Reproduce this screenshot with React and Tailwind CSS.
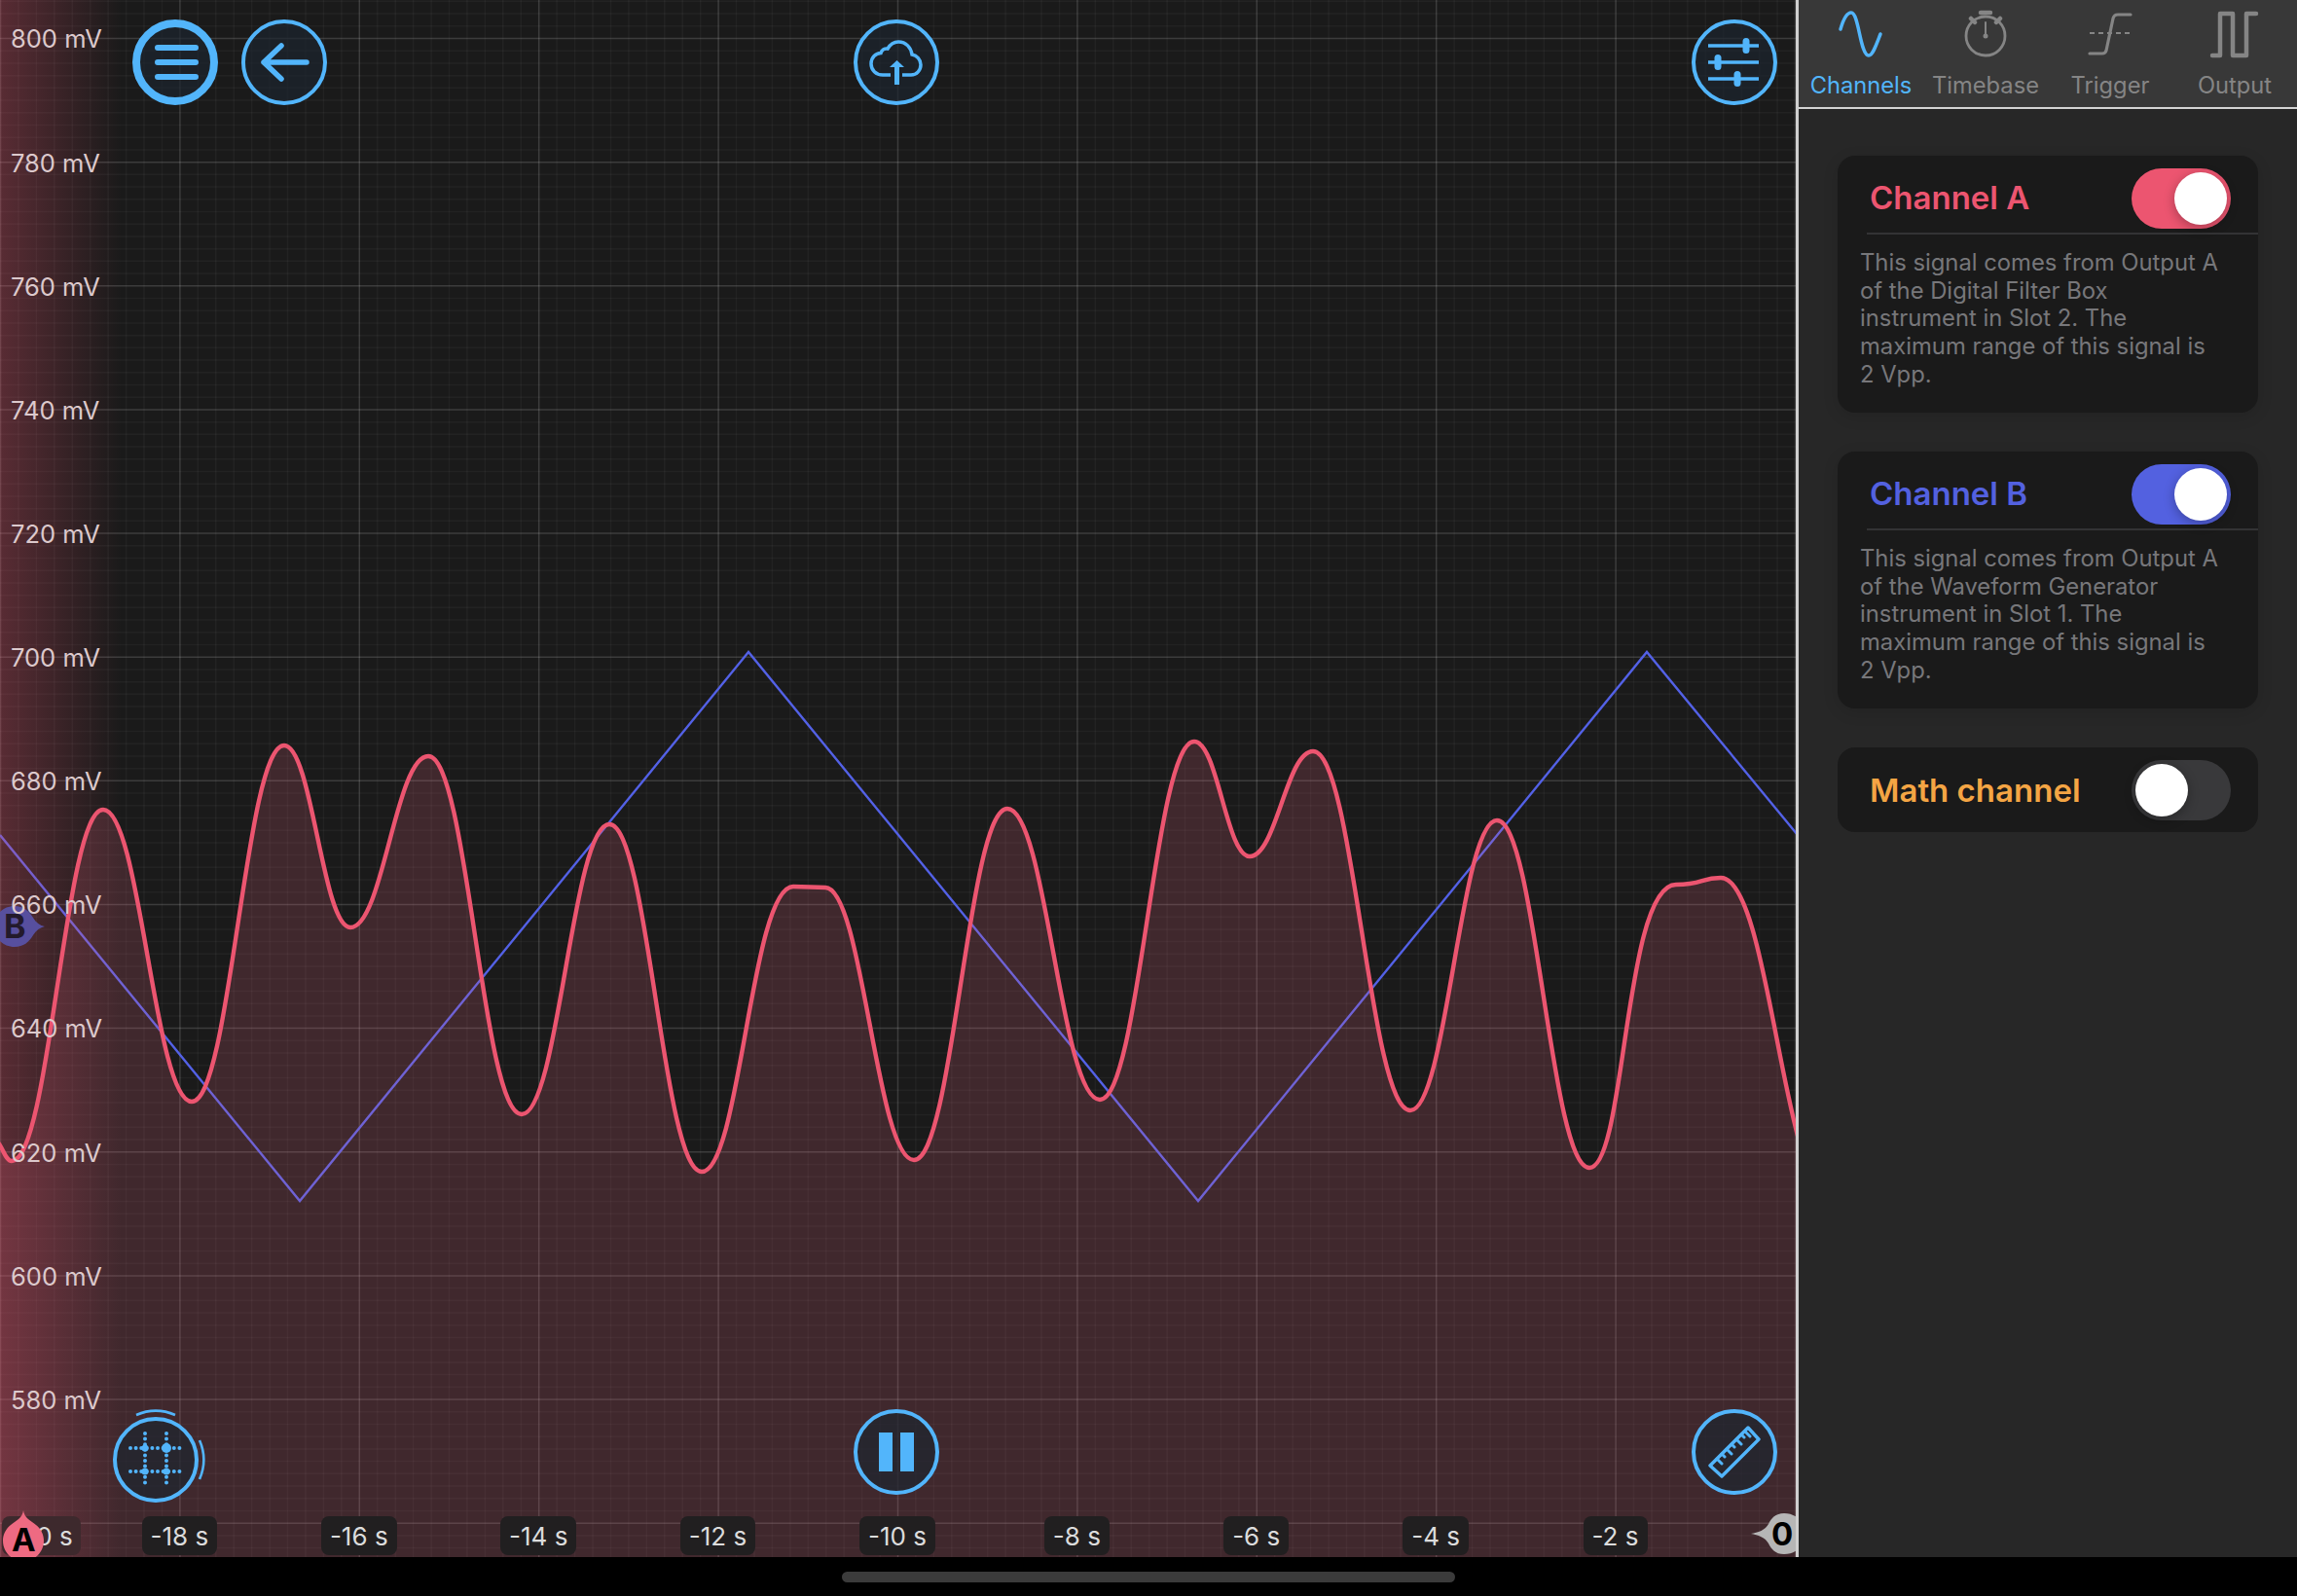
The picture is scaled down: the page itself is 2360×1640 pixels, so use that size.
const FONT = "[font-family:Inter,sans-serif]";

// turning points of channel A, joined with flat tangents (third value widens the top)
const redPoints = [
  [-6, 1172], [12, 1193], [106, 832], [197, 1132], [292, 766], [360, 953], [440, 777],
  [536, 1145], [626, 847], [721, 1204], [815, 911, 0.46], [848, 912, 0.42], [939, 1192], [1035, 831], [1130, 1130],
  [1227, 762], [1284, 880], [1349, 772], [1449, 1141], [1538, 843], [1633, 1200],
  [1722, 909, 0.6], [1768, 902, 0.45], [1879, 1225],
];

function curve(pts) {
  let d = `M${pts[0][0]} ${pts[0][1]}`;
  for (let i = 1; i < pts.length; i++) {
    const [x0, y0, k0 = 0.42] = pts[i - 1];
    const [x1, y1, k1 = 0.42] = pts[i];
    const dx = x1 - x0;
    d += ` C${x0 + dx * k0} ${y0} ${x1 - dx * k1} ${y1} ${x1} ${y1}`;
  }
  return d;
}

const redLine = curve(redPoints);
const xStep = 18.44;
const yStep = 12.714;

function Chart() {
  const verticals = Array.from({ length: 101 }, (_, i) => i);
  const horizontals = Array.from({ length: 130 }, (_, i) => i - 3);
  return (
    <svg className="absolute inset-0" width="1845" height="1600" viewBox="0 0 1845 1600">
      {verticals.map((i) => (
        <line key={i} x1={i * xStep + 0.5} x2={i * xStep + 0.5} y1="0" y2="1600" stroke="#fff" strokeOpacity={i % 10 === 0 ? 0.15 : 0.04} strokeWidth="1.5" />
      ))}
      {horizontals.map((i) => (
        <line key={i} y1={39.5 + i * yStep} y2={39.5 + i * yStep} x1="0" x2="1845" stroke="#fff" strokeOpacity={(i + 30) % 10 === 0 ? 0.15 : 0.04} strokeWidth="1.5" />
      ))}
      <path d="M0 858 L308 1234 L769 670 L1231 1234 L1692 670 L1847 858" fill="none" stroke="#5361e6" strokeWidth="2.4" />
      <path d={`${redLine} L1879 1600 L-6 1600 Z`} fill="#ec6a83" fillOpacity="0.18" />
      <path d={redLine} fill="none" stroke="#ec5570" strokeWidth="4.4" />
    </svg>
  );
}

function RoundButton({ className, thick, children }) {
  return (
    <div className={`absolute w-[88px] h-[88px] rounded-full bg-[#1d252f]/70 border-[#52b5fb] ${thick ? "border-[8px]" : "border-[4px]"} ${className}`}>
      <svg className={`absolute overflow-visible ${thick ? "inset-[-8px]" : "inset-[-4px]"}`} width="88" height="88" viewBox="0 0 88 88">
        {children}
      </svg>
    </div>
  );
}

function Toggle({ color, on }) {
  return (
    <div className={`w-[102px] h-[62px] rounded-full flex items-center px-[4px] ${color} ${on ? "justify-end" : "justify-start"}`}>
      <div className="w-[54px] h-[54px] rounded-full bg-white shadow-[0_3px_12px_rgba(0,0,0,0.3)]" />
    </div>
  );
}

function ChannelCard({ title, titleColor, toggleColor, lines }) {
  return (
    <div className="bg-[#1a1a1a] rounded-[18px] h-[264px] shadow-[0_4px_16px_rgba(0,0,0,0.12)]">
      <div className="ml-[30px] h-[81px] pt-[9px] pl-[3px] pr-[28px] flex items-center justify-between border-b-[2px] border-[#333335]">
        <span className={`text-[33px] font-semibold ${titleColor}`}>{title}</span>
        <div className="-mt-[1px]">
          <Toggle color={toggleColor} on />
        </div>
      </div>
      <div className="ml-[23px] mt-[15px] text-[23.8px] leading-[28.7px] text-[#77777a]">
        {lines.map((line) => (
          <div key={line}>{line}</div>
        ))}
      </div>
    </div>
  );
}

function Tab({ label, active, children }) {
  return (
    <div className={`flex-1 flex flex-col items-center ${active ? "text-[#52b5fb]" : "text-[#858585]"}`}>
      <svg className="mt-[10px] mb-[14px]" width="60" height="50" viewBox="0 0 60 50" fill="none" stroke="currentColor" strokeLinecap="round" strokeLinejoin="round">
        {children}
      </svg>
      <span className="text-[23.7px] leading-[28px]">{label}</span>
    </div>
  );
}

const yLabels = [800, 780, 760, 740, 720, 700, 680, 660, 640, 620, 600, 580];
const xLabels = [-18, -16, -14, -12, -10, -8, -6, -4, -2];

export default function App() {
  return (
    <div className={`w-[2360px] h-[1640px] bg-black flex flex-col overflow-hidden ${FONT}`}>
      <div className="h-[1600px] flex">
        <div className="relative w-[1845px] bg-[#1a1a1a] overflow-hidden">
          <Chart />
          <div className="absolute inset-y-0 left-0 w-[125px] bg-gradient-to-r from-[#ec5570]/30 to-transparent" />

          {/* channel B marker */}
          <svg className="absolute left-0 top-[930px]" width="50" height="44" viewBox="0 0 50 44">
            <path d="M15 1 C24 1 30 6 34 13 C37 18 41 21 46 22 C41 23 37 26 34 31 C30 38 24 43 15 43 C3 43 -6 34 -6 22 C-6 10 3 1 15 1 Z" fill="#574f9e" />
          </svg>
          <span className="absolute left-[4px] top-[932px] text-[34px] leading-[40px] font-bold text-[#231a2c]">B</span>

          <div className="absolute left-[11px] top-[-23px] flex flex-col">
            {yLabels.map((v) => (
              <div key={v} className="h-[127.14px] flex items-center text-[25.5px] text-[#dcc9cc]">{v} mV</div>
            ))}
          </div>

          <RoundButton thick className="left-[136px] top-[20px]">
            <path d="M26 29 H65 M26 44 H65 M26 59 H65" stroke="#52b5fb" strokeWidth="6" strokeLinecap="round" />
          </RoundButton>
          <RoundButton className="left-[248px] top-[20px]">
            <path d="M23 44 H67 M41 27 L23 44 L41 61" fill="none" stroke="#52b5fb" strokeWidth="5.5" strokeLinecap="round" strokeLinejoin="round" />
          </RoundButton>
          <RoundButton className="left-[877px] top-[20px]">
            <path d="M38 57 H30 C23 57 18 52 18 45.5 C18 39 23 34.5 28 34.5 C29 31 32 29.5 35 30 C38 25 41 23 46 23 C54 23 59 29 60 36 C65 37 69 41 69 46.5 C69 52 65 57 59 57 H50" fill="none" stroke="#52b5fb" strokeWidth="3.5" />
            <path d="M44.5 67 V46" stroke="#52b5fb" strokeWidth="5" />
            <path d="M37 49 L44.5 42 L52 49 Z" fill="#52b5fb" />
          </RoundButton>
          <RoundButton className="left-[1738px] top-[20px]">
            <g stroke="#52b5fb" strokeWidth="3.5">
              <path d="M17 27 H69 M17 44 H69 M17 61 H69" />
            </g>
            <rect x="52.5" y="19" width="7" height="16" rx="3.5" fill="#52b5fb" />
            <rect x="23.5" y="36" width="7" height="16" rx="3.5" fill="#52b5fb" />
            <rect x="43.5" y="53" width="7" height="16" rx="3.5" fill="#52b5fb" />
          </RoundButton>

          <RoundButton className="left-[116px] top-[1456px]">
            <path d="M33 17 V72 M55 17 V72 M18 32 H71 M18 56 H71" stroke="#52b5fb" strokeWidth="4" strokeLinecap="round" strokeDasharray="0 5.6" />
            <circle cx="55" cy="32" r="5" fill="#52b5fb" />
            <circle cx="33" cy="32" r="3.5" fill="#52b5fb" />
            <circle cx="33" cy="56" r="3.5" fill="#52b5fb" />
            <circle cx="55" cy="56" r="3.5" fill="#52b5fb" />
            <path d="M24 -2 A50 50 0 0 1 64 -2 M89 24 A50 50 0 0 1 89 64" fill="none" stroke="#52b5fb" strokeWidth="2.6" />
          </RoundButton>
          <RoundButton className="left-[877px] top-[1448px]">
            <rect x="26" y="24" width="14" height="40" fill="#52b5fb" />
            <rect x="48" y="24" width="14" height="40" fill="#52b5fb" />
          </RoundButton>
          <RoundButton className="left-[1738px] top-[1448px]">
            <path d="M58 19 L69 31 L31 69 L19 58 Z" fill="none" stroke="#52b5fb" strokeWidth="3.4" strokeLinejoin="round" />
            <path d="M26 51 L31 56 M31 46 L34 49 M36 41 L41 46 M41 36 L44 39 M46 31 L51 36 M51 26 L54 29 M55 23 L60 28" stroke="#52b5fb" strokeWidth="3" strokeLinecap="round" />
          </RoundButton>

          {/* time axis */}
          <div className="absolute left-[2px] top-[1558px] h-[40px] w-[81px] rounded-[8px] bg-[#3d292d] flex items-center justify-center text-[26px] text-[#dcdcdc]">-20 s</div>
          <div className="absolute left-[92.2px] top-[1558px] flex">
            {xLabels.map((v) => (
              <div key={v} className="w-[184.4px] flex justify-center">
                <div className="h-[40px] px-[9px] rounded-[8px] bg-[#211f20] flex items-center text-[26px] text-[#dcdcdc]">{v} s</div>
              </div>
            ))}
          </div>

          {/* channel A and zero markers */}
          <svg className="absolute left-0 top-[1552px]" width="48" height="48" viewBox="0 0 48 48">
            <path d="M24 0 C25 8 32 11 37 15 C42 19 45 25 45 31 C45 43 36 52 24 52 C12 52 3 43 3 31 C3 25 6 19 11 15 C16 11 23 8 24 0 Z" fill="#ee6a82" />
          </svg>
          <span className="absolute left-[12px] top-[1564px] text-[33px] leading-[36px] font-bold text-black">A</span>
          <svg className="absolute left-[1799px] top-[1554px]" width="46" height="44" viewBox="0 0 46 44">
            <path d="M34 1 C25 1 21 6 18 12 C15 18 7 21 0 22 C7 23 15 26 18 32 C21 38 25 43 34 43 C46 43 56 34 56 22 C56 10 46 1 34 1 Z" fill="#b6b6b6" />
          </svg>
          <span className="absolute left-[1820px] top-[1556px] text-[33px] leading-[40px] font-bold text-black">0</span>
        </div>

        <div className="w-[515px] bg-[#272727] border-l-[3px] border-[#cfcfcf] flex flex-col">
          <div className="h-[112px] bg-[#383838] border-b-[2px] border-[#d4d4d4] flex">
            <Tab label="Channels" active>
              <path d="M9 20 C13 6 17 3 20 3 C28 3 29 47 38 47 C42 47 45 38 50 25" strokeWidth="3.5" />
            </Tab>
            <Tab label="Timebase">
              <circle cx="30" cy="27" r="20" strokeWidth="2.8" />
              <path d="M30 13 V27" strokeWidth="2" />
              <circle cx="30" cy="27" r="2.5" fill="currentColor" strokeWidth="0" />
              <path d="M25 3 H35 M15 9 L19 13 M45 9 L41 13" strokeWidth="4.5" />
            </Tab>
            <Tab label="Trigger">
              <path d="M9 24 H52" strokeWidth="2" strokeDasharray="5 4" strokeLinecap="butt" />
              <path d="M9 45 H22 Q25 45 26 42 L33 9 Q34 5 38 5 H51" strokeWidth="3.2" />
            </Tab>
            <Tab label="Output">
              <path d="M7 47 H15 V4 H28 V47 H42 V4 H52" strokeWidth="4.5" />
            </Tab>
          </div>
          <div className="pt-[48px] pl-[40px] pr-[40px] flex flex-col gap-[40px]">
            <ChannelCard
              title="Channel A"
              titleColor="text-[#ec5570]"
              toggleColor="bg-[#ec5570]"
              lines={["This signal comes from Output A", "of the Digital Filter Box", "instrument in Slot 2. The", "maximum range of this signal is", "2 Vpp."]}
            />
            <ChannelCard
              title="Channel B"
              titleColor="text-[#5361e0]"
              toggleColor="bg-[#5361e0]"
              lines={["This signal comes from Output A", "of the Waveform Generator", "instrument in Slot 1. The", "maximum range of this signal is", "2 Vpp."]}
            />
            <div className="bg-[#1a1a1a] rounded-[18px] h-[87px] pl-[33px] pr-[28px] flex items-center justify-between">
              <span className="text-[33px] font-semibold text-[#f4a544] pt-[2px]">Math channel</span>
              <Toggle color="bg-[#39393b]" />
            </div>
          </div>
        </div>
      </div>
      <div className="h-[40px] flex items-center justify-center">
        <div className="w-[630px] h-[11px] rounded-full bg-[#3b3b3b]" />
      </div>
    </div>
  );
}
